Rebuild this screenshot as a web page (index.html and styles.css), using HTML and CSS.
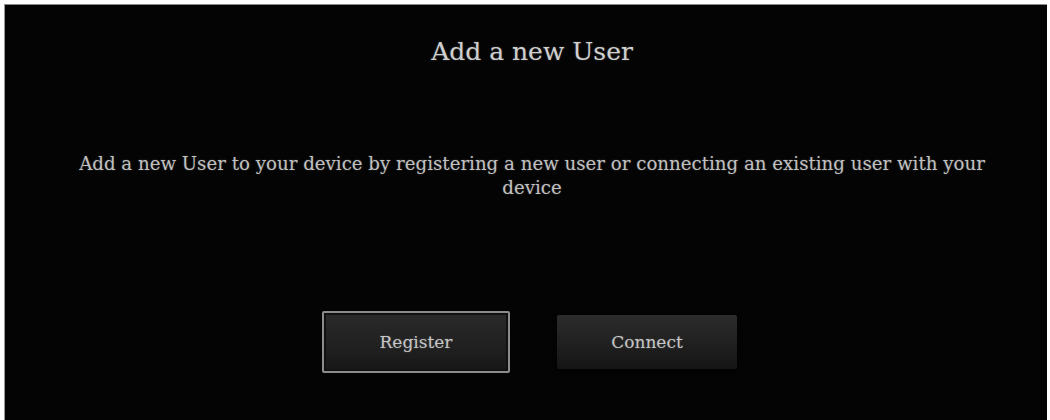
FILE: index.html
```html
<!DOCTYPE html>
<html>
<head>
<meta charset="utf-8">
<link rel="stylesheet" href="styles.css">
</head>
<body>
<div class="panel">
  <h1 class="title">Add a new User</h1>
  <p class="desc">Add a new User to your device by registering a new user or connecting an existing user with your device</p>
  <div class="actions">
    <button class="btn btn-focus">Register</button>
    <button class="btn">Connect</button>
  </div>
</div>
</body>
</html>
```
FILE: styles.css
```css
html, body {
  margin: 0;
  padding: 0;
  background: #ffffff;
  height: 100%;
  overflow: hidden;
}
.panel {
  margin: 4px 3px 0 4px;
  height: 416px;
  box-sizing: border-box;
  background: #040404;
  border-top: 1px solid #8a8a8a;
  border-left: 1px solid #9a9a9a;
  display: flex;
  flex-direction: column;
  align-items: center;
  font-family: "DejaVu Serif", serif;
  color: #c4c4c4;
}
.title {
  margin: 32px 0 0 12px;
  font-size: 25px;
  font-weight: normal;
  line-height: 30px;
  color: #cfcfcf;
  text-shadow: 0 0 2px rgba(200,200,200,0.35);
}
.desc {
  margin: 85px 0 0 12px;
  width: 930px;
  text-align: center;
  font-size: 18.2px;
  line-height: 24px;
  color: #c0c0c0;
  text-shadow: 0 0 2px rgba(200,200,200,0.3);
}
.actions {
  margin-top: 111px;
  display: flex;
  align-items: center;
  gap: 47px;
  margin-left: 7px;
}
.btn {
  font-family: "DejaVu Serif", serif;
  font-size: 17px;
  color: #c6c6c6;
  width: 180px;
  height: 54px;
  border: none;
  border-radius: 2px;
  background: linear-gradient(#2c2c2c, #1c1c1c 70%, #151515);
  box-shadow: 0 0 4px rgba(0,0,0,0.8);
  text-shadow: 0 0 2px rgba(200,200,200,0.3);
  padding: 0;
}
.btn-focus {
  width: 188px;
  height: 62px;
  border: 2px solid #8c8c8c;
  box-shadow: inset 0 0 0 2px #111;
  background: linear-gradient(#2a2a2a, #1e1e1e 70%, #161616);
}
```
